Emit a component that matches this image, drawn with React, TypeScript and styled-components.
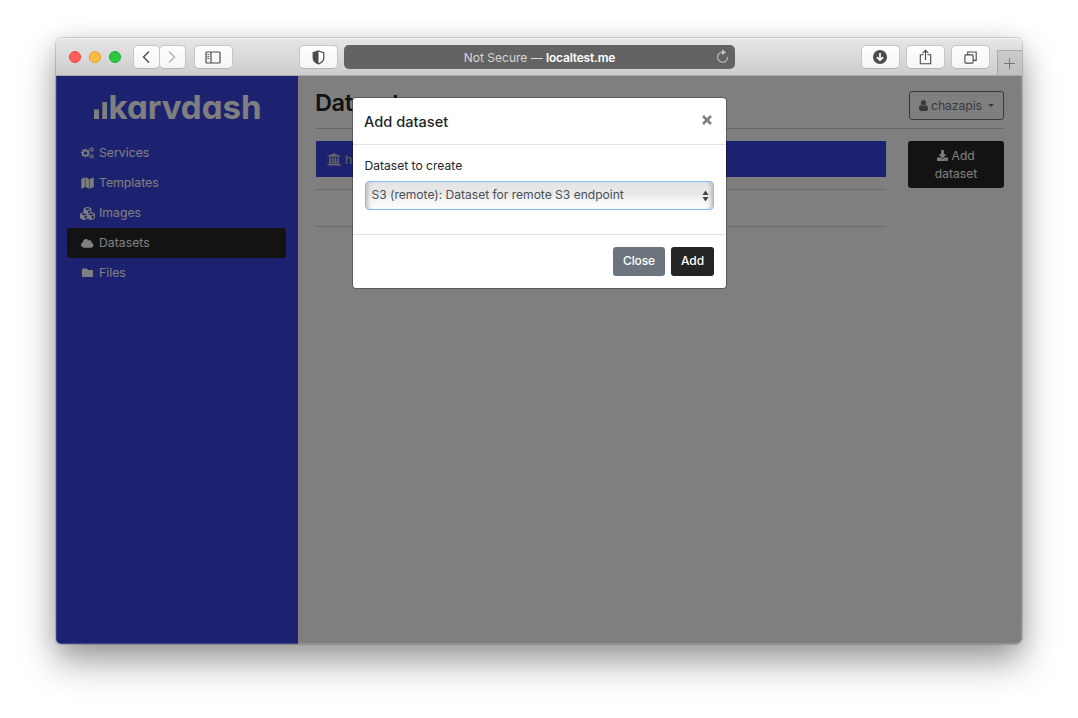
import React from "react";
import styled, { createGlobalStyle } from "styled-components";
import { FaCubes, FaCloud, FaFolder, FaDownload } from "react-icons/fa";

const GlobalStyle = createGlobalStyle`
  * { box-sizing: border-box; }
  html, body { margin: 0; height: 718px; overflow: hidden; background: #fff; }
  body { font-family: Inter, "Liberation Sans", sans-serif; font-size: 12px; color: #212529; padding: 38px 0 0 56px; }
  button { font-family: inherit; margin: 0; }
`;

const Window = styled.div`
  width: 966px;
  height: 606px;
  border-radius: 6px 6px 5px 5px;
  box-shadow: 0 0 0 1px rgba(0, 0, 0, 0.16), 0 18px 36px rgba(0, 0, 0, 0.36), 0 4px 24px rgba(0, 0, 0, 0.12);
  display: flex;
  flex-direction: column;
`;

const Toolbar = styled.header`
  height: 38px;
  flex: none;
  display: flex;
  padding: 7px 0 0 13px;
  border-radius: 6px 6px 0 0;
  border-bottom: 1px solid #a9a9a9;
  background: linear-gradient(#e6e6e6, #cdcdcd);
  box-shadow: inset 0 1px #f5f5f5;
`;

const Light = styled.span<{ $fill: string; $edge: string }>`
  width: 12px;
  height: 12px;
  margin: 6px 8px 0 0;
  border-radius: 50%;
  background: ${(p) => p.$fill};
  border: 1px solid ${(p) => p.$edge};
`;

const ToolButton = styled.button<{ $w?: number; $gap?: number }>`
  width: ${(p) => p.$w ?? 39}px;
  height: 24px;
  margin-left: ${(p) => p.$gap ?? 6}px;
  padding: 0 1px 0 0;
  display: flex;
  align-items: center;
  justify-content: center;
  border: 1px solid #c6c6c6;
  border-bottom-color: #b4b4b4;
  border-radius: 5px;
  background: linear-gradient(#fefefe, #f5f5f5);
`;

const Address = styled.div`
  position: relative;
  width: 391px;
  height: 24px;
  margin-left: 6px;
  border-radius: 5px;
  background: #636363;
  color: #d6d6d6;
  font-size: 12px;
  line-height: 25px;
  text-align: center;
  b { color: #fff; font-weight: 600; letter-spacing: -0.2px; }
  svg { position: absolute; right: 5px; top: 4px; }
`;

const NewTab = styled.div`
  width: 25px;
  height: 25px;
  margin: 5px 0 0 7px;
  padding-right: 1px;
  display: flex;
  align-items: center;
  justify-content: center;
  border-left: 1px solid #aaa;
  border-top: 1px solid #aaa;
  background: linear-gradient(#cbcbcb, #c0c0c0);
`;

const Page = styled.div`
  position: relative;
  flex: 1;
  display: flex;
  border-radius: 0 0 5px 5px;
  overflow: hidden;
  background: #fff;
`;

const Sidebar = styled.nav`
  width: 242px;
  padding: 0 12px 0 11px;
  background: #3844e0;
`;

const Logo = styled.svg`
  display: block;
  width: 172px;
  height: 36px;
  margin: 12px 0 14px 25px;
  overflow: visible;
`;

const NavItem = styled.a<{ $active?: boolean }>`
  height: 30px;
  padding: 0 0 1px 13px;
  display: flex;
  align-items: center;
  color: #fff;
  border-radius: 3px;
  background: ${(p) => (p.$active ? "#262626" : "transparent")};
  font-size: 12.25px;
`;

const NavIcon = styled.span`
  width: 15px;
  margin: 1px 4px 0 0;
  display: flex;
  justify-content: center;
  svg { flex: none; }
`;

const Main = styled.main`
  flex: 1;
  padding: 0 18px;
`;

const TitleRow = styled.div`
  height: 53px;
  padding-top: 15px;
  display: flex;
  justify-content: space-between;
  border-bottom: 1px solid rgba(0, 0, 0, 0.18);
`;

const Title = styled.h1`
  margin: -4px 0 0 -1px;
  font-size: 23.5px;
  line-height: 31px;
  font-weight: 600;
  letter-spacing: -0.4px;
`;

const UserButton = styled.button`
  width: 95px;
  height: 29px;
  padding: 0 9px 1px;
  display: flex;
  align-items: center;
  border: 1px solid #6c757d;
  border-radius: 3px;
  background: transparent;
  color: #6c757d;
  font-size: 12.25px;
  letter-spacing: -0.1px;
  svg { margin-right: 3px; }
`;

const Caret = styled.i`
  margin-left: auto;
  border: 3.5px solid transparent;
  border-top-color: #6c757d;
  border-bottom: 0;
`;

const Columns = styled.div`
  display: flex;
  justify-content: space-between;
  padding-top: 12px;
`;

const List = styled.div`
  width: 570px;
`;

const ListHeader = styled.div`
  height: 36px;
  padding-left: 11px;
  display: flex;
  align-items: center;
  gap: 4px;
  background: #3844e0;
  color: #ccc;
  font-size: 12.25px;
`;

const Rule = styled.hr<{ $top: number }>`
  height: 1px;
  margin: ${(p) => p.$top}px 0 0;
  border: 0;
  background: rgba(0, 0, 0, 0.16);
`;

const AddDataset = styled.button`
  width: 96px;
  height: 47px;
  padding: 0 20px;
  border: 0;
  border-radius: 3px;
  background: #262626;
  color: #fff;
  font-size: 12.1px;
  line-height: 18px;
  svg { vertical-align: -1px; }
`;

const Backdrop = styled.div`
  position: absolute;
  inset: 0;
  background: rgba(0, 0, 0, 0.5);
  border-radius: 0 0 5px 5px;
  box-shadow: inset 1px 0 rgba(255, 255, 255, 0.13), inset -1px -1px rgba(255, 255, 255, 0.16);
`;

const Modal = styled.section`
  position: absolute;
  left: 297px;
  top: 22px;
  width: 373px;
  height: 190px;
  border-radius: 3px;
  background: #fff;
  box-shadow: 0 0 0 1px rgba(0, 0, 0, 0.28);
`;

const ModalHeader = styled.div`
  height: 47px;
  padding: 0 14px 0 12px;
  display: flex;
  align-items: center;
  justify-content: space-between;
  border-bottom: 1px solid #dee2e6;
  h2 { margin: 1px 0 0 -1px; font-size: 14.6px; font-weight: 500; }
  svg { margin-top: -3px; }
`;

const ModalBody = styled.div`
  height: 89px;
  padding: 11px 12px 0;
  label { display: block; height: 25px; margin-left: -0.5px; line-height: 20px; font-size: 12.1px; }
`;

const Select = styled.div`
  height: 29px;
  padding: 0 4px 2px 5.500px;
  display: flex;
  align-items: center;
  justify-content: space-between;
  border: 1px solid #80bdff;
  border-radius: 4px;
  background: linear-gradient(#e4e4e4 0%, #e9e9e9 48%, #f1f1f1 56%, #fff 100%);
  box-shadow: inset 5px 0 4px -3px #bbb, inset -5px 0 4px -3px #bbb;
  color: #495057;
  font-size: 12.05px;
  svg { margin-top: 2px; }
`;

const ModalFooter = styled.div`
  height: 54px;
  padding: 12px 12px 0;
  display: flex;
  justify-content: flex-end;
  gap: 6px;
  border-top: 1px solid #dee2e6;
`;

const ActionButton = styled.button<{ $w: number; $bg: string }>`
  width: ${(p) => p.$w}px;
  height: 29px;
  padding: 0 0 2px;
  border: 0;
  border-radius: 3px;
  background: ${(p) => p.$bg};
  color: #fff;
  font-size: 12px;
  font-weight: 500;
  letter-spacing: -0.1px;
`;

const Chevron = ({ right }: { right?: boolean }) => (
  <svg width="10" height="14" viewBox="0 0 10 14" fill="none" stroke={right ? "#b0b0b0" : "#4a4a4a"} strokeWidth="1.4">
    <path d={right ? "M2 1.5 7.5 7 2 12.5" : "M8 1.5 2.5 7 8 12.5"} />
  </svg>
);

const CogsIcon = () => (
  <svg width="13" height="12" viewBox="0 0 13 12" fill="none" stroke="currentColor">
    <circle cx="4.5" cy="6" r="2.7" strokeWidth="1.7" />
    <circle cx="4.5" cy="6" r="3.9" strokeWidth="1.2" strokeDasharray="1.53 1.53" strokeDashoffset=".75" />
    <circle cx="10.6" cy="2.6" r="1.4" strokeWidth="1" />
    <circle cx="10.6" cy="2.6" r="2.1" strokeWidth=".7" strokeDasharray="1.1 1.1" />
    <circle cx="10.6" cy="9.4" r="1.4" strokeWidth="1" />
    <circle cx="10.6" cy="9.4" r="2.1" strokeWidth=".7" strokeDasharray="1.1 1.1" />
  </svg>
);

const MapIcon = () => (
  <svg width="13" height="12" viewBox="0 0 13 12" fill="currentColor">
    <path d="M.3 1.900 3.900.2v9.900L.3 11.800zM4.500.2l3.800 1.700v9.900L4.500 10.100zM8.900 1.900 12.700.2v9.900L8.900 11.800z" />
  </svg>
);

const BankIcon = () => (
  <svg width="14" height="13" viewBox="0 0 14 13" fill="currentColor">
    <path d="M7 .3 13.600 2.900v.9H.4v-.9zM2.200 4.500h1.700v5h1v-5h1.600v5h1v-5h1.600v5h1v-5h1.700v5h.6v.9H1.600v-.9h.6zM.9 10.900h12.200l.5.5v1H.4v-1z" />
  </svg>
);

const items = [
  { label: "Services", icon: <CogsIcon /> },
  { label: "Templates", icon: <MapIcon /> },
  { label: "Images", icon: <FaCubes size={15} /> },
  { label: "Datasets", icon: <FaCloud size={12.5} />, active: true },
  { label: "Files", icon: <FaFolder size={11.5} /> },
];

export default function App() {
  return (
    <>
      <GlobalStyle />
      <Window>
        <Toolbar>
          <Light $fill="#ff5f57" $edge="#e2463f" />
          <Light $fill="#febc40" $edge="#e0a02f" />
          <Light $fill="#2bc840" $edge="#1dab2e" />
          <ToolButton $w={27} $gap={4}><Chevron /></ToolButton>
          <ToolButton $w={27} $gap={-1}><Chevron right /></ToolButton>
          <ToolButton $gap={8}>
            <svg width="16" height="13" viewBox="0 0 16 13" fill="none" stroke="#4a4a4a">
              <rect x="1" y="1" width="14" height="11" rx="1" strokeWidth="1.2" />
              <path d="M6 1v11" strokeWidth="1.2" />
              <path d="M2.3 3.5h2M2.3 5.5h2M2.3 7.5h2" strokeWidth=".9" />
            </svg>
          </ToolButton>
          <ToolButton $gap={66}>
            <svg width="13" height="15" viewBox="0 0 13 15">
              <path d="M6.5 1 11.8 2.8v5c0 3-2.7 5.2-5.3 6.2-2.6-1-5.3-3.2-5.3-6.2v-5z" fill="none" stroke="#4a4a4a" strokeWidth="1.2" />
              <path d="M6.5 1v13c-2.6-1-5.3-3.2-5.3-6.2v-5z" fill="#4a4a4a" />
            </svg>
          </ToolButton>
          <Address>
            Not Secure — <b>localtest.me</b>
            <svg width="15" height="16" viewBox="0 0 15 16" fill="none" stroke="#c8c8c8" strokeWidth="1.1">
              <path d="M7.5 3.2A5 5 0 1 0 12.6 8.3" />
              <path d="M7 .6 11 3.3 7 6z" fill="#c8c8c8" stroke="none" />
            </svg>
          </Address>
          <ToolButton $gap={126}>
            <svg width="14" height="14" viewBox="0 0 14 14">
              <circle cx="7" cy="7" r="7" fill="#4a4a4a" />
              <path d="M7 3v7M3.9 7.2 7 10.3l3.1-3.1" fill="none" stroke="#fff" strokeWidth="1.7" />
            </svg>
          </ToolButton>
          <ToolButton>
            <svg width="13" height="16" viewBox="0 0 13 16" fill="none" stroke="#4a4a4a" strokeWidth="1.1">
              <path d="M4.5 5.8H1.3v9h10.400v-9H8.500M6.500 11V1.400M3.600 4.200l2.900-2.900 2.900 2.900" />
            </svg>
          </ToolButton>
          <ToolButton>
            <svg width="13" height="13" viewBox="0 0 13 13" fill="none" stroke="#4a4a4a" strokeWidth="1.1">
              <rect x=".9" y="3.9" width="8.2" height="8.2" rx=".8" />
              <path d="M3.7 3.9V1h8.5v8.4H9.1" />
            </svg>
          </ToolButton>
          <NewTab>
            <svg width="11" height="11" viewBox="0 0 11 11" stroke="#777"><path d="M5.500 0v11M0 5.500h11" /></svg>
          </NewTab>
        </Toolbar>
        <Page>
          <Sidebar>
            <Logo viewBox="0 0 172 36" fill="#fff">
              <rect x="2" y="21.5" width="5" height="9.5" />
              <rect x="10.3" y="14" width="4.7" height="17" />
              <text x="16.5" y="31" fontSize="33" fontWeight="700" textLength="153" lengthAdjust="spacingAndGlyphs" style={{ fontFeatureSettings: '"cv11"' }}>karvdash</text>
            </Logo>
            {items.map((it) => (
              <NavItem key={it.label} $active={it.active}>
                <NavIcon>{it.icon}</NavIcon>
                {it.label}
              </NavItem>
            ))}
          </Sidebar>
          <Main>
            <TitleRow>
              <Title>Datasets</Title>
              <UserButton>
                <svg width="9" height="11" viewBox="0 128 1280 1536" fill="currentColor">
                  <path d="M1280 1399q0 109-62.5 187t-150.5 78h-854q-88 0-150.5-78T0 1399q0-85 8.5-160.500T40 1087t58.500-131 94-89T327 832q131 128 313 128t313-128q76 0 134.500 34.500t94 89T1240 1087t31.500 151.500T1280 1399zM1024 512q0 159-112.500 271.500T640 896 368.500 783.500 256 512t112.500-271.500T640 128t271.500 112.500T1024 512z" />
                </svg>
                chazapis
                <Caret />
              </UserButton>
            </TitleRow>
            <Columns>
              <List>
                <ListHeader><BankIcon />http</ListHeader>
                <Rule $top={12} />
                <Rule $top={36} />
              </List>
              <AddDataset><FaDownload size={11} /> Add dataset</AddDataset>
            </Columns>
          </Main>
          <Backdrop />
          <Modal>
            <ModalHeader>
              <h2>Add dataset</h2>
              <svg width="10" height="10" viewBox="0 0 10 10" stroke="#7f7f7f" strokeWidth="2.6"><path d="m1 1 8 8M9 1 1 9" /></svg>
            </ModalHeader>
            <ModalBody>
              <label>Dataset to create</label>
              <Select>
                S3 (remote): Dataset for remote S3 endpoint
                <svg width="7" height="12" viewBox="0 0 7 12" fill="#404549"><path d="M.5 5 3.500.5 6.500 5zM.5 7l3 4.500 3-4.500z" /></svg>
              </Select>
            </ModalBody>
            <ModalFooter>
              <ActionButton $w={52} $bg="#6c757d">Close</ActionButton>
              <ActionButton $w={43} $bg="#242424">Add</ActionButton>
            </ModalFooter>
          </Modal>
        </Page>
      </Window>
    </>
  );
}
